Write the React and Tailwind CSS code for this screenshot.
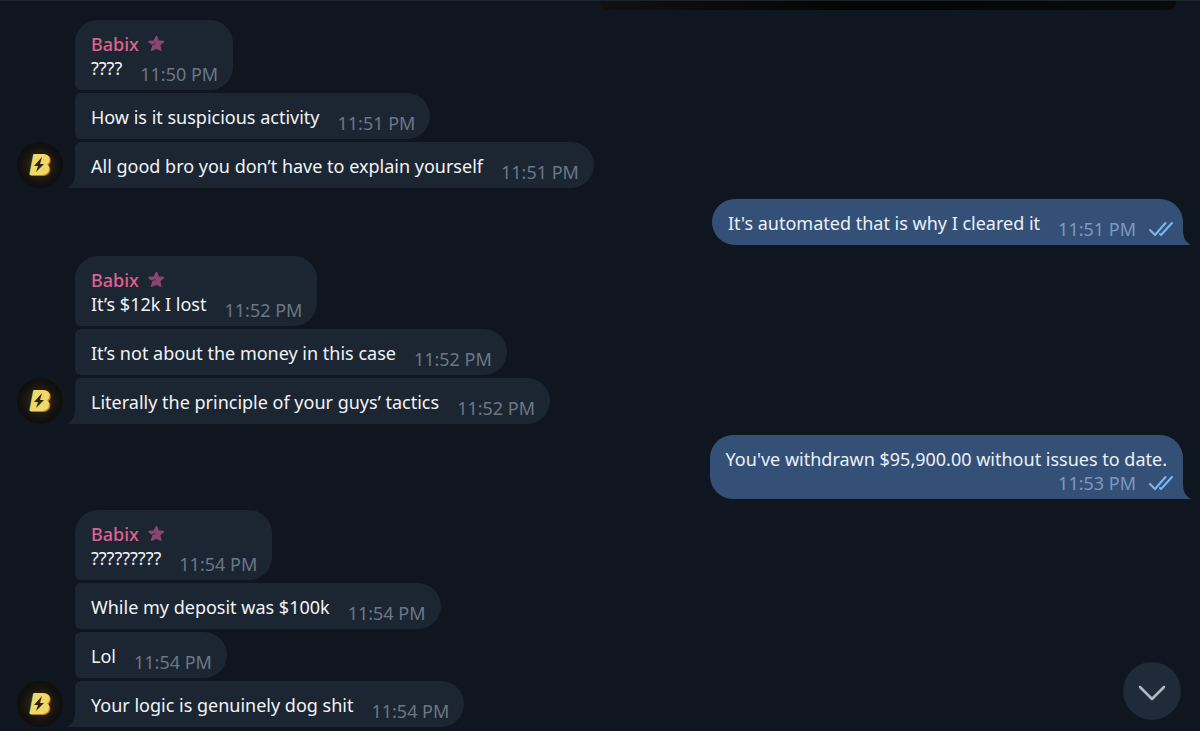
import React from 'react';
import clsx from 'clsx';

const thread = [
  {
    from: 'Babix',
    messages: [
      { text: '????', time: '11:50 PM' },
      { text: 'How is it suspicious activity', time: '11:51 PM' },
      { text: 'All good bro you don’t have to explain yourself', time: '11:51 PM' },
    ],
  },
  { own: true, messages: [{ text: "It's automated that is why I cleared it", time: '11:51 PM' }] },
  {
    from: 'Babix',
    messages: [
      { text: 'It’s $12k I lost', time: '11:52 PM' },
      { text: 'It’s not about the money in this case', time: '11:52 PM' },
      { text: 'Literally the principle of your guys’ tactics', time: '11:52 PM' },
    ],
  },
  {
    own: true,
    messages: [{ text: "You've withdrawn $95,900.00 without issues to date.", time: '11:53 PM', long: true }],
  },
  {
    from: 'Babix',
    messages: [
      { text: '?????????', time: '11:54 PM' },
      { text: 'While my deposit was $100k', time: '11:54 PM' },
      { text: 'Lol', time: '11:54 PM' },
      { text: 'Your logic is genuinely dog shit', time: '11:54 PM' },
    ],
  },
];

function Avatar() {
  return (
    <svg viewBox="0 0 46 46" className="w-[46px] h-[46px] shrink-0" aria-hidden="true">
      <defs>
        <radialGradient id="glow">
          <stop offset="0" stopColor="#4a3c12" />
          <stop offset="0.5" stopColor="#241e10" />
          <stop offset="0.8" stopColor="#13110e" />
          <stop offset="1" stopColor="#0d0e10" />
        </radialGradient>
      </defs>
      <circle cx="23" cy="23" r="23" fill="url(#glow)" />
      <g fontFamily="Liberation Sans, sans-serif" fontSize="27" fontWeight="700" fontStyle="italic" strokeLinejoin="round" strokeWidth="2">
        <text x="14" y="33" fill="#a8842c" stroke="#a8842c">B</text>
        <text x="13" y="32" fill="#f0d868" stroke="#f0d868">B</text>
      </g>
      <path d="M19 16h8l-1 12h-9z" fill="#f0d868" />
      <path d="M25 15l-8 9h4l-2 6 8-8h-4z" fill="#2b240f" />
    </svg>
  );
}

function StarBadge() {
  return (
    <svg viewBox="0 0 18 18" className="w-[18px] h-[18px]" aria-hidden="true">
      <path
        d="M9.500 1.500l1.700 4.500 5.300.6-4 3.300 1.300 5.300-4.500-2.200-4.800 2.200 1.700-4.900L2 6.600l5.200-.6z"
        fill="#8b4570"
        stroke="#8b4570"
        strokeWidth="1.500"
        strokeLinejoin="round"
      />
      <path d="M3.500 10.600c1.600-1.300 3.200-1.700 5-1.800" fill="none" stroke="#1c2632" strokeWidth="0.800" strokeLinecap="round" />
    </svg>
  );
}

function Ticks() {
  return (
    <svg viewBox="0 0 24 16" className="w-6 h-4" fill="none" stroke="#79b8f5" strokeWidth="2" strokeLinecap="round" strokeLinejoin="round" aria-label="Read">
      <path d="M1 9l5 5L16.500 2" />
      <path d="M11 13l1 1L23 2" />
    </svg>
  );
}

function Tail({ own }) {
  return (
    <svg
      viewBox="0 0 8 16"
      className={clsx('absolute bottom-0 w-2 h-4', own ? 'left-full text-[#355076]' : 'right-full text-[#1c2632]')}
      aria-hidden="true"
    >
      {own ? <path d="M0 0c0 8 2 13 8 16H0z" fill="currentColor" /> : <path d="M8 0c0 8-2 13-8 16h8z" fill="currentColor" />}
    </svg>
  );
}

function Bubble({ message, from, own, first, last }) {
  return (
    <div
      className={clsx(
        'relative w-fit max-w-full pt-3 pb-1 pl-4',
        own ? 'bg-[#355076] rounded-l-[23px] rounded-tr-[23px] pr-[10px]' : 'bg-[#1c2632] rounded-r-[23px] pr-[15px]',
        !own && (first ? 'rounded-tl-[23px]' : 'rounded-tl-md'),
        !own && !last && 'rounded-bl-md'
      )}
    >
      {from && (
        <div className="flex items-center gap-2 text-[18px] leading-6 font-medium text-[#e0608f]">
          {from}
          <StarBadge />
        </div>
      )}
      <div className={clsx('flex', message.long ? 'flex-col items-end' : 'items-end gap-[18px]')}>
        <p className={clsx('text-[18px] leading-6', own ? 'text-[#e9f1fb]' : 'text-[#f1f4f7]', message.long ? 'pr-[6px]' : 'pb-[6px]')}>
          {message.text}
        </p>
        <div className={clsx('flex items-center gap-[13px] text-[18px] leading-6 whitespace-nowrap', own ? 'text-[#7b98c4]' : 'text-[#6b7785]')}>
          <time>{message.time}</time>
          {own && <Ticks />}
        </div>
      </div>
      {last && <Tail own={own} />}
    </div>
  );
}

function Group({ group }) {
  const { own, from, messages } = group;
  return (
    <section className={clsx('flex items-end gap-3', own && 'justify-end')}>
      {!own && <Avatar />}
      <div className="flex flex-col gap-[3px] min-w-0">
        {messages.map((message, i) => (
          <Bubble
            key={i}
            message={message}
            own={own}
            from={i === 0 ? from : null}
            first={i === 0}
            last={i === messages.length - 1}
          />
        ))}
      </div>
    </section>
  );
}

export default function App() {
  return (
    <div className="min-h-screen bg-[#0f161f] border-t border-[#1b252e] font-['Noto_Sans',sans-serif]">
      {/* bottom edge of the photo that is scrolled out of view */}
      <div className="h-[9px] w-[48%] ml-auto mr-6 rounded-b-lg bg-linear-to-r from-[#12110f] via-[#050505] via-45% to-[#090a0b]" />
      <main className="flex flex-col gap-[11px] pt-[10px] px-[17px] pb-1">
        {thread.map((group, i) => (
          <Group key={i} group={group} />
        ))}
      </main>
      <button
        aria-label="Scroll to bottom"
        className="fixed right-[19px] bottom-[11px] w-[58px] h-[58px] rounded-full bg-[#1f2b38] flex items-center justify-center"
      >
        <svg viewBox="0 0 28 16" className="w-7 h-4 mt-1" fill="none" stroke="#b4bac1" strokeWidth="2.500" strokeLinecap="round" strokeLinejoin="round">
          <path d="M2 2l12 12L26 2" />
        </svg>
      </button>
    </div>
  );
}
